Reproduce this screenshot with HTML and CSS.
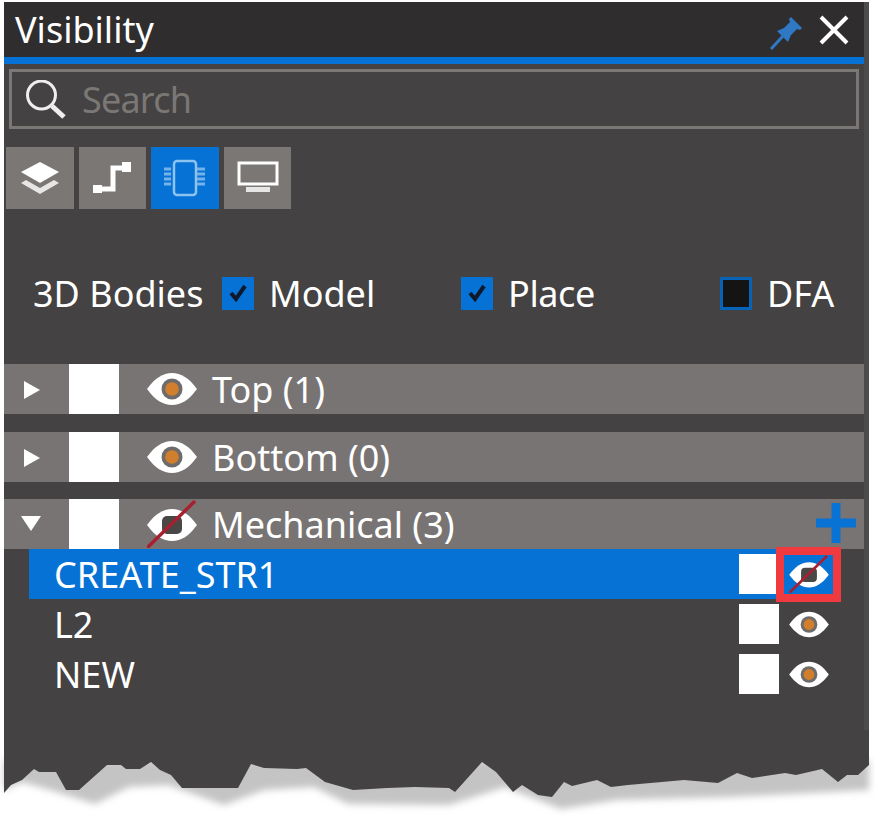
FILE: index.html
```html
<!DOCTYPE html>
<html lang="en">
<head>
<meta charset="utf-8">
<title>Visibility</title>
<link rel="stylesheet" href="styles.css">
</head>
<body>
<svg width="0" height="0" class="defs">
  <defs>
    <symbol id="eye" viewBox="0 0 50 34">
      <path d="M0 17C8 6 16 1 25 1s17 5 25 16C42 28 34 33 25 33S8 28 0 17Z" fill="#fff"/>
      <circle cx="25" cy="17" r="10.5" fill="#6f6b6a"/>
      <circle cx="25" cy="17" r="6.8" fill="#d17f2c"/>
    </symbol>
    <symbol id="eye-off" viewBox="0 0 50 48">
      <path d="M0 25C8 14 16 9 25 9s17 5 25 16C42 36 34 41 25 41S8 36 0 25Z" fill="#fff"/>
      <rect x="15" y="16" width="20" height="18" rx="5" fill="#4a4847"/>
      <path d="M0 48 48 1" stroke="#a81f30" stroke-width="3.4" fill="none"/>
    </symbol>
  </defs>
</svg>
<main class="panel">
  <header class="title-bar">
    <h1 class="title">Visibility</h1>
    <div class="title-actions">
      <svg class="pin" width="34" height="34" viewBox="0 0 34 34"><path d="M2 33 14 20" stroke="#2f78c4" stroke-width="3" fill="none"/><path d="M8 15 19 26l3-7 6-6 3 1 2-2L22 1l-2 2 1 3-6 6Z" fill="#2f78c4"/></svg>
      <svg class="close" width="30" height="30" viewBox="0 0 30 30"><path d="M2 2 28 28M28 2 2 28" stroke="#fff" stroke-width="4" fill="none"/></svg>
    </div>
  </header>
  <div class="accent"></div>
  <div class="search">
    <svg class="search-icon" width="42" height="42" viewBox="0 0 42 42"><circle cx="15.5" cy="15" r="14" stroke="#eee" stroke-width="3" fill="none"/><path d="M26 26 38 37" stroke="#eee" stroke-width="5" fill="none"/></svg>
    <span class="search-text">Search</span>
  </div>
  <nav class="tabs">
    <button class="tab tab-w68"><svg width="42" height="34" viewBox="0 0 42 34"><path d="M21 1 40 11 21 22 2 11Z" fill="#fff"/><path d="M7 19 21 27 35 19 40 22 21 33 2 22Z" fill="#e6e6e6"/></svg></button>
    <button class="tab tab-w67"><svg width="42" height="34" viewBox="0 0 42 34"><path d="M3 28H21V7H38" stroke="#fff" stroke-width="5" fill="none"/><rect x="1" y="24" width="9" height="8" fill="#fff"/><rect x="30" y="1" width="9" height="10" fill="#fff"/></svg></button>
    <button class="tab tab-w68 tab-on"><svg width="42" height="38" viewBox="0 0 42 38"><rect x="10" y="2" width="22" height="34" rx="3" stroke="#8cc3ef" stroke-width="2.5" fill="none"/><path d="M0 10h7M0 15h7M0 20h7M0 25h7M33 10h8M33 15h8M33 20h8M33 25h8" stroke="#74b2e8" stroke-width="3" fill="none"/></svg></button>
    <button class="tab tab-w67"><svg width="42" height="34" viewBox="0 0 42 34"><rect x="2" y="2" width="38" height="21" stroke="#fff" stroke-width="3" fill="none"/><rect x="9" y="26" width="24" height="5" fill="#e6e6e6"/></svg></button>
  </nav>
  <div class="bodies">
    <span class="bodies-label">3D Bodies</span>
    <label class="check check-model"><span class="box box-on"><svg width="20" height="20" viewBox="0 0 20 20"><path d="M3 10 8 16 17 3" stroke="#0e1a2c" stroke-width="4" fill="none"/></svg></span>Model</label>
    <label class="check check-place"><span class="box box-on"><svg width="20" height="20" viewBox="0 0 20 20"><path d="M3 10 8 16 17 3" stroke="#0e1a2c" stroke-width="4" fill="none"/></svg></span>Place</label>
    <label class="check"><span class="box box-off"></span>DFA</label>
  </div>
  <section class="layer">
    <span class="arrow arrow-right"></span><span class="swatch"></span>
    <svg class="eye"><use href="#eye"/></svg><span class="layer-name">Top (1)</span>
  </section>
  <section class="layer layer-tight">
    <span class="arrow arrow-right"></span><span class="swatch"></span>
    <svg class="eye"><use href="#eye"/></svg><span class="layer-name">Bottom (0)</span>
  </section>
  <section class="layer layer-flush">
    <span class="arrow arrow-down"></span><span class="swatch"></span>
    <svg class="eye eye-tall"><use href="#eye-off"/></svg><span class="layer-name">Mechanical (3)</span>
    <svg class="plus" width="40" height="40" viewBox="0 0 40 40"><path d="M20 0V40M0 20H40" stroke="#0873d4" stroke-width="9" fill="none"/></svg>
  </section>
  <ul class="items">
    <li class="item item-on">
      <span class="item-name">CREATE_STR1</span><span class="item-swatch"></span>
      <span class="item-eye"><svg class="mini-eye-off"><use href="#eye-off"/></svg><span class="mark"></span></span>
    </li>
    <li class="item">
      <span class="item-name">L2</span><span class="item-swatch"></span>
      <span class="item-eye"><svg class="mini-eye"><use href="#eye"/></svg></span>
    </li>
    <li class="item">
      <span class="item-name">NEW</span><span class="item-swatch"></span>
      <span class="item-eye"><svg class="mini-eye"><use href="#eye"/></svg></span>
    </li>
  </ul>
  <svg class="torn" width="875" height="91" viewBox="0 0 875 91">
    <defs><filter id="blur" x="-5%" y="-30%" width="110%" height="170%"><feGaussianBlur stdDeviation="3.5"/></filter></defs>
    <rect width="875" height="91" fill="#fff"/>
    <path class="torn-shadow" filter="url(#blur)" d="M4 30H869V60L729 67 617 70 561 79 505 57 449 75 348 74 314 57 264 60 224 75 168 55 129 57 95 74 50 60 22 52 4 60Z" fill="#c4c4c4"/>
    <path d="M4 0H869V35L858 45 847 45 838 52 822 39 796 45 785 43 752 48 737 43 718 53 684 50 628 55 611 57 597 50 572 56 564 52 552 67 538 65 522 55 513 62 496 42 482 32 455 62 449 58 415 57 387 58 353 60 325 52 306 38 297 39 264 38 251 34 238 58 182 58 171 45 160 40 151 32 140 39 126 39 121 35 107 35 79 60 66 60 56 42 39 42 34 39 22 50 11 55 4 63Z" fill="#444242"/>
  </svg>
</main>
</body>
</html>
```

FILE: styles.css
```css
* { box-sizing: border-box; }
html, body { margin: 0; padding: 0; height: 821px; overflow: hidden; background: #fff; }
body { font-family: "Noto Sans", "Open Sans", sans-serif; color: #fff; padding-top: 2px; }
.defs { position: absolute; }

.panel {
  position: relative;
  margin-left: 4px;
  width: 865px;
  height: 819px;
  background: #444242;
  border-right: 5px solid #4e4c4b;
  font-size: 36px;
}

.title-bar {
  height: 55px;
  display: flex;
  align-items: center;
  justify-content: space-between;
  background: #2f2d2e;
  padding-left: 11px;
  padding-right: 15px;
}
.title { margin: 0; font-size: 36px; font-weight: 400; line-height: 55px; }
.title-actions { display: flex; align-items: center; gap: 16px; }
.pin { margin-top: 6px; }
.close { margin-top: 0; }

.accent { height: 7px; background: #0672d6; }

.search {
  margin: 5px 5px 0;
  height: 60px;
  border: 3px solid #7b7775;
  display: flex;
  align-items: center;
  padding-left: 14px;
}
.search-icon { margin-top: 4px; }
.search-text { color: #7b7775; margin-left: 14px; letter-spacing: -0.8px; }

.tabs { display: flex; gap: 5px; margin: 18px 0 0 2px; }
.tab {
  height: 62px;
  border: 0;
  padding: 0;
  background: #7b7775;
  display: flex;
  align-items: center;
  justify-content: center;
}
.tab-w68 { width: 68px; }
.tab-w67 { width: 67px; }
.tab-on { background: #0672d6; }

.bodies {
  height: 40px;
  margin-top: 64px;
  display: flex;
  align-items: center;
  padding-left: 29px;
}
.bodies-label { width: 189px; }
.check { display: flex; align-items: center; gap: 15px; }
.check-model { width: 239px; }
.check-place { width: 259px; letter-spacing: -0.4px; }
.box { width: 32px; height: 33px; display: flex; align-items: center; justify-content: center; }
.box-on { background: #0672d6; }
.box-off { background: #141414; border: 3px solid #0663b8; }

.layer {
  height: 50px;
  margin-bottom: 18px;
  background: #787473;
  display: flex;
  align-items: center;
  position: relative;
}
.layer-tight { margin-bottom: 17px; }
.layer-flush { margin-bottom: 0; }
.layer:first-of-type { margin-top: 51px; }
.arrow { width: 65px; display: block; position: relative; height: 16px; }
.arrow::before { content: ""; position: absolute; border-style: solid; border-color: transparent; }
.arrow-right::before { left: 20px; top: 0; border-width: 9px 0 9px 16px; border-left-color: #fff; }
.arrow-down::before { left: 17px; top: 0; border-width: 15px 10px 0; border-top-color: #fff; }
.swatch { width: 50px; height: 50px; background: #fff; }
.eye { width: 50px; height: 34px; margin-left: 28px; }
.eye-tall { height: 48px; }
.layer-name { margin-left: 15px; }
.plus { position: absolute; right: 8px; top: 4px; }

.items { list-style: none; margin: 0 0 0 25px; padding: 0; width: 805px; }
.item { height: 50px; display: flex; align-items: center; padding-left: 25px; padding-right: 5px; }
.item-on { background: #0672d6; }
.item-name { flex: 1; }
.item-swatch { width: 40px; height: 40px; background: #fff; }
.item-eye {
  width: 40px;
  height: 40px;
  margin-left: 10px;
  position: relative;
  display: flex;
  align-items: center;
  justify-content: center;
}
.mini-eye { width: 40px; height: 27px; }
.mini-eye-off { width: 40px; height: 38px; }
.mark {
  position: absolute;
  left: -13px;
  top: -7px;
  width: 65px;
  height: 55px;
  border: 8px solid #f03a3f;
}

.torn { position: absolute; left: -4px; top: 728px; }
```
